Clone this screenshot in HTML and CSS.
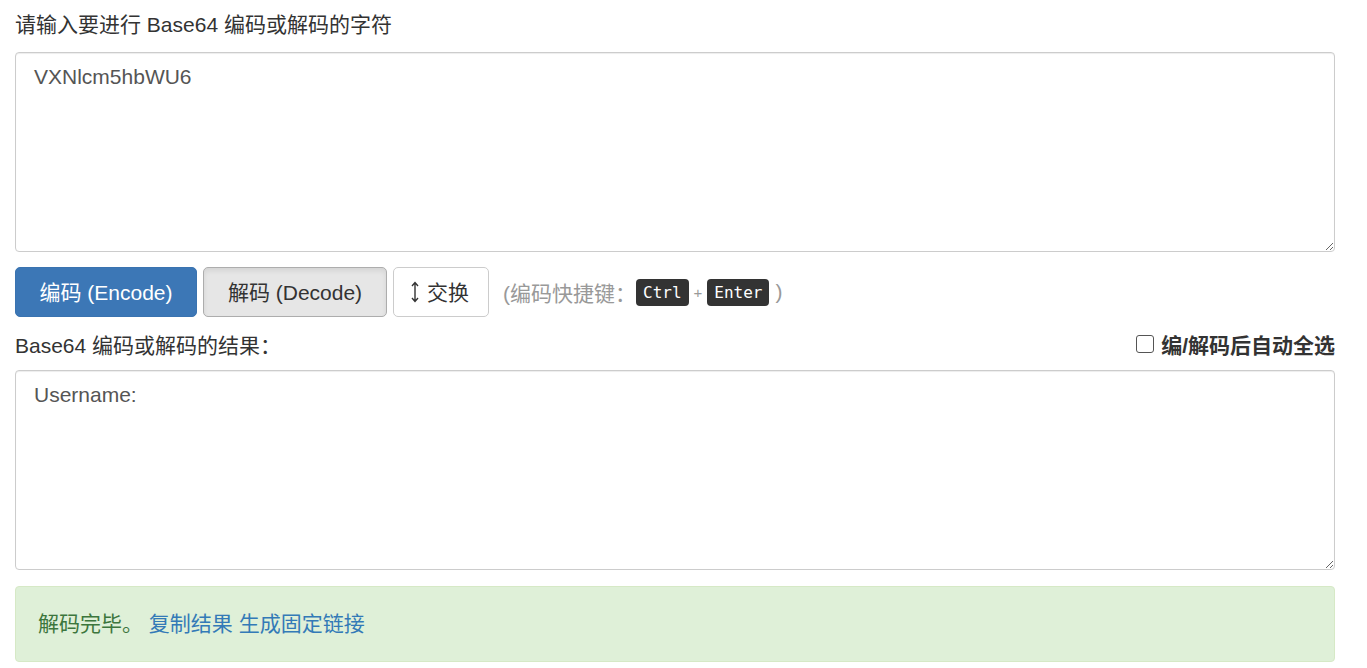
FILE: index.html
```
<!DOCTYPE html>
<html lang="zh-CN">
<head>
<meta charset="utf-8">
<title>Base64 编码/解码</title>
<link rel="stylesheet" href="styles.css">
</head>
<body>
<div class="page">
  <div class="title">请输入要进行 Base64 编码或解码的字符</div>
  <textarea class="box box-input">VXNlcm5hbWU6</textarea>
  <div class="actions">
    <button class="btn btn-primary">编码 (Encode)</button>
    <button class="btn btn-active">解码 (Decode)</button>
    <button class="btn btn-default"><svg class="swap-icon" width="8" height="22" viewBox="0 0 8 22"><path d="M4 1.5V20.5M1 5L4 1.5L7 5M1 17L4 20.5L7 17" fill="none" stroke="#333" stroke-width="1.4"/></svg><span>交换</span></button>
    <span class="hint">(编码快捷键：<kbd>Ctrl</kbd><span class="plus">+</span><kbd>Enter</kbd><span class="close">)</span></span>
  </div>
  <div class="result-row">
    <span class="result-label">Base64 编码或解码的结果：</span>
    <label class="auto-select"><span class="check"></span>编/解码后自动全选</label>
  </div>
  <textarea class="box box-output">Username:</textarea>
  <div class="alert">解码完毕。 <a class="link" href="#">复制结果</a> <a class="link" href="#">生成固定链接</a></div>
</div>
</body>
</html>
```
FILE: styles.css
```
* { box-sizing: border-box; }
html, body { margin: 0; padding: 0; background: #fff; }
body {
  font-family: "Liberation Sans", "Noto Sans CJK SC", sans-serif;
  font-size: 21px;
  color: #333;
}
.page {
  width: 1320px;
  margin-left: 15px;
  padding-top: 10px;
  display: flex;
  flex-direction: column;
}
.title {
  line-height: 30px;
  margin-bottom: 12px;
}
.box {
  display: block;
  width: 100%;
  border: 1px solid #ccc;
  border-radius: 4px;
  padding: 10px 18px;
  font-family: "Liberation Sans", "Noto Sans CJK SC", sans-serif;
  font-size: 21px;
  line-height: 28px;
  color: #555;
  box-shadow: inset 0 1px 1px rgba(0,0,0,0.075);
  resize: vertical;
  margin: 0;
}
.box-input { height: 200px; }
.box-output { height: 200px; }
.actions {
  margin-top: 15px;
  display: flex;
  align-items: center;
  gap: 6px;
}
.btn {
  height: 50px;
  padding: 0 20px 3px;
  font-family: "Liberation Sans", "Noto Sans CJK SC", sans-serif;
  font-size: 21px;
  border-radius: 5px;
  border: 1px solid #ccc;
  background: #fff;
  color: #333;
  display: flex;
  align-items: center;
  gap: 8px;
  margin: 0;
}
.btn-primary {
  background: #3c77b6;
  border-color: #3a73b0;
  color: #fff;
  width: 182px;
  justify-content: center;
}
.btn-active {
  background: #e6e6e6;
  border-color: #adadad;
  box-shadow: inset 0 3px 5px rgba(0,0,0,0.08);
  width: 184px;
  justify-content: center;
}
.btn-default {
  width: 96px;
  padding: 0 16px 3px 17px;
}
.swap-icon { display: block; flex: none; margin-top: 3px; }
.hint {
  margin-left: 8px;
  color: #999;
  display: flex;
  align-items: center;
}
kbd {
  display: inline-block;
  background: #333;
  color: #fff;
  font-family: "DejaVu Sans Mono", "Liberation Mono", monospace;
  font-size: 16px;
  line-height: 27px;
  height: 27px;
  padding: 0 7px;
  border-radius: 4px;
}
.plus {
  font-size: 15px;
  margin: 0 5px;
  color: #999;
}
.close { margin-left: 6px; }
.result-row {
  margin-top: 10px;
  height: 34px;
  display: flex;
  align-items: center;
  justify-content: space-between;
  margin-bottom: 9px;
}
.auto-select {
  font-weight: bold;
  display: flex;
  align-items: center;
  gap: 7px;
}
.check {
  width: 18px;
  height: 18px;
  border: 1.5px solid #555;
  border-radius: 3px;
  background: #fff;
  display: inline-block;
}
.alert {
  margin-top: 16px;
  background: #dff0d8;
  border: 1px solid #d6e9c6;
  border-radius: 4px;
  color: #3c763d;
  padding: 23px 22px;
  line-height: 28px;
}
.link {
  color: #337ab7;
  text-decoration: none;
}
```
